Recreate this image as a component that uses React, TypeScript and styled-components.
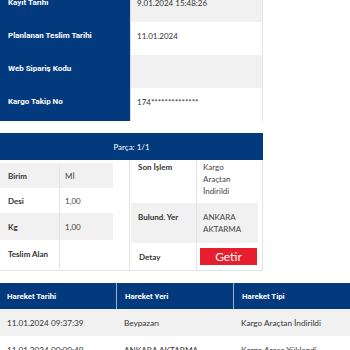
import React from "react";
import styled, { createGlobalStyle } from "styled-components";

const GlobalStyle = createGlobalStyle`
  html, body { margin: 0; padding: 0; background: #fff; }
  body { font-family: Lato, "Noto Sans", sans-serif; color: #333; }
`;

const BLUE = "#033a7e";
const GRAY = "#f1f1f1";
const LINE = "#e4e4e4";

const Page = styled.div`
  margin-top: -11px;
  width: 350px;
`;

const InfoTable = styled.div`
  width: 263px;
  display: grid;
  grid-template-columns: 131px 132px;
`;

const InfoLabel = styled.div`
  height: 33px;
  box-sizing: border-box;
  background: ${BLUE};
  color: #fff;
  font-family: Roboto, "Liberation Sans", sans-serif;
  font-weight: 700;
  font-size: 8px;
  line-height: 12px;
  padding: 8px 0 0 8px;
  border-right: 1px solid #d7dbe3;
`;

const InfoValue = styled.div<{ $alt?: boolean }>`
  height: 33px;
  box-sizing: border-box;
  background: ${(p) => (p.$alt ? GRAY : "#fff")};
  font-size: 8px;
  line-height: 12px;
  padding: 8px 0 0 6px;
  border-right: 1px solid ${LINE};
  color: #333;
`;

const PartCard = styled.div`
  width: 263px;
  margin-top: 12px;
`;

const PartHeader = styled.div`
  height: 27px;
  background: ${BLUE};
  color: #fff;
  font-size: 8px;
  display: flex;
  align-items: center;
  justify-content: center;
`;

const PartBody = styled.div`
  display: grid;
  grid-template-columns: 130px 133px;
  border-bottom: 1px solid ${LINE};
  border-right: 1px solid ${LINE};
  box-sizing: border-box;
`;

const LeftCell = styled.div`
  padding: 3px 16px 0 0;
  border-right: 1px solid ${LINE};
`;

const RightCell = styled.div`
  padding: 0 4px 0 1px;
`;

const DetailGrid = styled.div<{ $cols: string }>`
  display: grid;
  grid-template-columns: ${(p) => p.$cols};
`;

const DLabel = styled.div<{ $alt?: boolean; $h: number; $top?: number }>`
  height: ${(p) => p.$h}px;
  box-sizing: border-box;
  background: ${(p) => (p.$alt ? GRAY : "#fff")};
  font-weight: 700;
  font-size: 8px;
  line-height: 12px;
  color: #333;
  padding: ${(p) => (p.$top !== undefined ? `${p.$top}px 0 0 7px` : "0 0 0 8px")};
  display: flex;
  align-items: ${(p) => (p.$top !== undefined ? "flex-start" : "center")};
  border-right: 1px solid ${LINE};
`;

const DValue = styled.div<{ $alt?: boolean; $h: number; $top?: number }>`
  height: ${(p) => p.$h}px;
  box-sizing: border-box;
  background: ${(p) => (p.$alt ? GRAY : "#fff")};
  font-size: 8px;
  line-height: 12px;
  color: #444;
  padding: ${(p) => (p.$top !== undefined ? `${p.$top}px 0 0 6px` : "0 0 0 5px")};
  display: flex;
  align-items: ${(p) => (p.$top !== undefined ? "flex-start" : "center")};
`;

const ButtonCell = styled.div`
  height: 27px;
  box-sizing: border-box;
  display: flex;
  align-items: center;
  padding-left: 3px;
`;

const GetirButton = styled.button`
  width: 57px;
  height: 17px;
  border: none;
  background: #e61e2d;
  color: #fff;
  font-family: Lato, sans-serif;
  font-size: 12px;
  line-height: 17px;
  padding: 0;
  cursor: pointer;
`;

const MoveTable = styled.div`
  margin-top: 12px;
  display: grid;
  grid-template-columns: 116px 117px 117px;
`;

const MoveHead = styled.div<{ $first?: boolean }>`
  height: 26px;
  box-sizing: border-box;
  background: ${BLUE};
  color: #fff;
  font-family: Roboto, "Liberation Sans", sans-serif;
  font-weight: 700;
  font-size: 7.8px;
  display: flex;
  align-items: center;
  padding-left: ${(p) => (p.$first ? 7 : 8)}px;
  border-left: ${(p) => (p.$first ? "none" : "1px solid #9fb0c8")};
`;

const MoveCell = styled.div<{ $alt?: boolean; $first?: boolean }>`
  height: 27px;
  box-sizing: border-box;
  background: ${(p) => (p.$alt ? GRAY : "#fff")};
  font-size: 8.2px;
  color: #333;
  display: flex;
  align-items: center;
  padding-left: ${(p) => (p.$first ? 7 : 8)}px;
  white-space: nowrap;
  overflow: hidden;
`;

const info = [
  ["Kayıt Tarihi", "9.01.2024 15:48:26"],
  ["Planlanan Teslim Tarihi", "11.01.2024"],
  ["Web Sipariş Kodu", ""],
  ["Kargo Takip No", "174**************"],
];

const moves = [
  ["11.01.2024 09:37:39", "Beypazarı", "Kargo Araçtan İndirildi"],
  ["11.01.2024 00:00:49", "ANKARA AKTARMA", "Kargo Araca Yüklendi"],
];

export default function App() {
  return (
    <>
      <GlobalStyle />
      <Page>
        <InfoTable>
          {info.map(([l, v], i) => (
            <React.Fragment key={l}>
              <InfoLabel>{l}</InfoLabel>
              <InfoValue $alt={i % 2 === 0}>{v}</InfoValue>
            </React.Fragment>
          ))}
        </InfoTable>

        <PartCard>
          <PartHeader>Parça: 1/1</PartHeader>
          <PartBody>
            <LeftCell>
              <DetailGrid $cols="60px 53px">
                <DLabel $alt $h={25}>Birim</DLabel>
                <DValue $alt $h={25}>Mİ</DValue>
                <DLabel $h={25}>Desi</DLabel>
                <DValue $h={25}>1,00</DValue>
                <DLabel $alt $h={27}>Kg</DLabel>
                <DValue $alt $h={27}>1,00</DValue>
                <DLabel $h={28}>Teslim Alan</DLabel>
                <DValue $h={28}></DValue>
              </DetailGrid>
            </LeftCell>
            <RightCell>
              <DetailGrid $cols="66px 61px">
                <DLabel $h={43} $top={1}>Son İşlem</DLabel>
                <DValue $h={43} $top={1}>Kargo<br />Araçtan<br />İndirildi</DValue>
                <DLabel $alt $h={40} $top={8}>Bulund. Yer</DLabel>
                <DValue $alt $h={40} $top={8}>ANKARA<br />AKTARMA</DValue>
                <DLabel $h={27}>Detay</DLabel>
                <ButtonCell>
                  <GetirButton>Getir</GetirButton>
                </ButtonCell>
              </DetailGrid>
            </RightCell>
          </PartBody>
        </PartCard>

        <MoveTable>
          <MoveHead $first>Hareket Tarihi</MoveHead>
          <MoveHead>Hareket Yeri</MoveHead>
          <MoveHead>Hareket Tipi</MoveHead>
          {moves.map((r, i) => (
            <React.Fragment key={i}>
              <MoveCell $alt={i % 2 === 0} $first>{r[0]}</MoveCell>
              <MoveCell $alt={i % 2 === 0}>{r[1]}</MoveCell>
              <MoveCell $alt={i % 2 === 0}>{r[2]}</MoveCell>
            </React.Fragment>
          ))}
        </MoveTable>
      </Page>
    </>
  );
}
